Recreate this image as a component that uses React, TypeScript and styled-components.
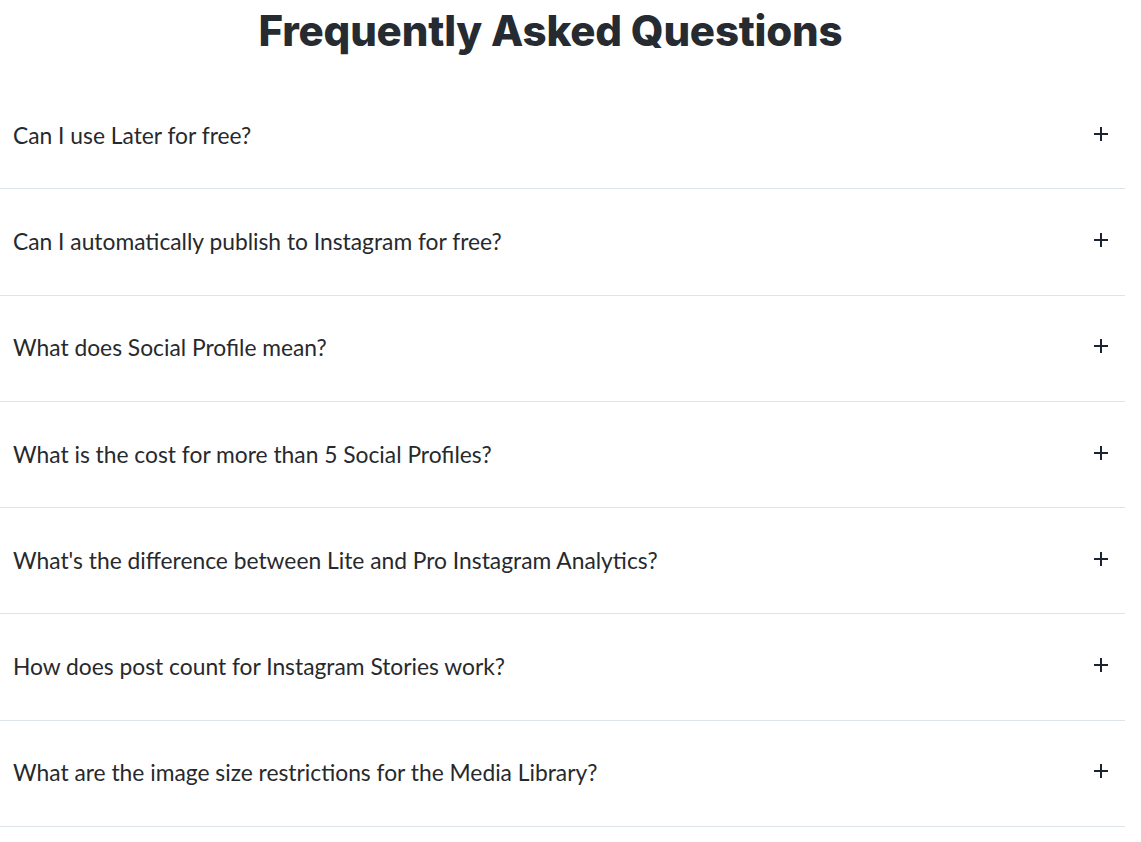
import React from "react";
import styled, { createGlobalStyle } from "styled-components";

const Global = createGlobalStyle`
  html, body { margin: 0; padding: 0; background: #ffffff; }
  body { font-family: "Lato", "Liberation Sans", sans-serif; }
`;

const Page = styled.main`
  width: 1125px;
  display: flex;
  flex-direction: column;
`;

const Title = styled.h2`
  margin: 0;
  padding: 5px 24px 0 0;
  height: 83px;
  box-sizing: border-box;
  text-align: center;
  font-family: "Inter", "Open Sans", sans-serif;
  font-weight: 800;
  font-size: 42px;
  letter-spacing: -0.2px;
  color: #262b31;
  line-height: 52px;
`;

const List = styled.ul`
  list-style: none;
  margin: 0;
  padding: 0;
  display: flex;
  flex-direction: column;
`;

const Item = styled.li`
  height: 106.3px;
  box-sizing: border-box;
  border-bottom: 1px solid #dde5ec;
  display: flex;
  align-items: center;
  justify-content: space-between;
  padding: 0 16px 0 13px;
`;

const Question = styled.span`
  font-family: "Lato", "Liberation Sans", sans-serif;
  font-size: 22.8px;
  color: #27292d;
  padding-bottom: 2px;
`;

const Plus = styled.svg`
  width: 16px;
  height: 16px;
  flex: none;
  margin-top: -4px;
`;

const questions = [
  "Can I use Later for free?",
  "Can I automatically publish to Instagram for free?",
  "What does Social Profile mean?",
  "What is the cost for more than 5 Social Profiles?",
  "What's the difference between Lite and Pro Instagram Analytics?",
  "How does post count for Instagram Stories work?",
  "What are the image size restrictions for the Media Library?",
];

export default function App() {
  return (
    <>
      <Global />
      <Page>
        <Title>Frequently Asked Questions</Title>
        <List>
          {questions.map((q) => (
            <Item key={q}>
              <Question>{q}</Question>
              <Plus viewBox="0 0 16 16" shapeRendering="crispEdges">
                <path d="M8 1v14M1 8h14" stroke="#1a2430" strokeWidth="2" />
              </Plus>
            </Item>
          ))}
        </List>
      </Page>
    </>
  );
}
